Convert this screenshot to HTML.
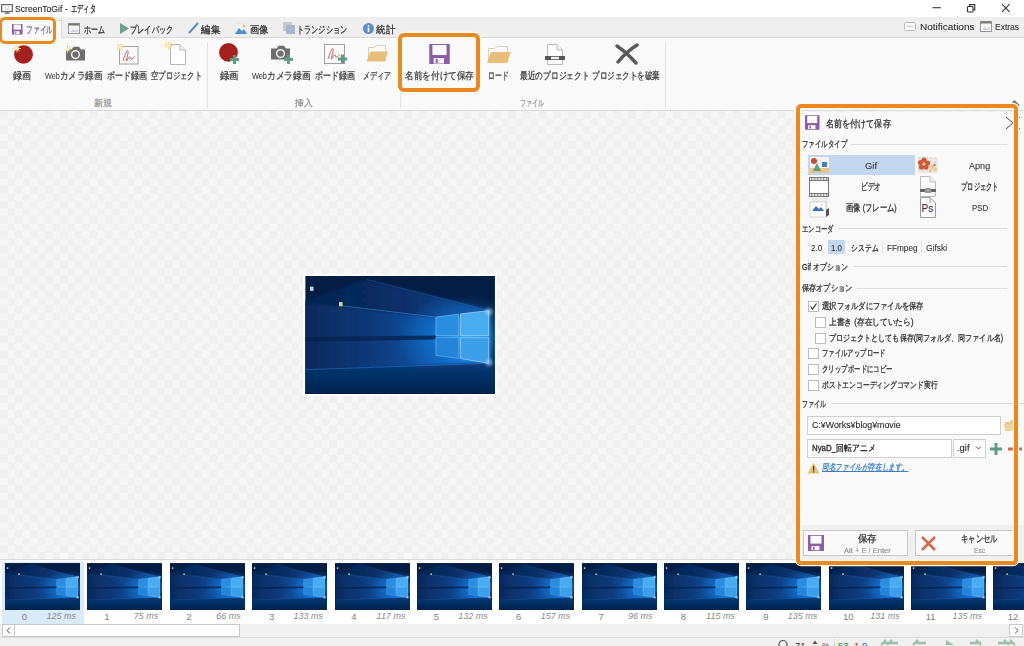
<!DOCTYPE html><html><head><meta charset="utf-8"><style>
html,body{margin:0;padding:0;width:1024px;height:646px;overflow:hidden;background:#fff;font-family:"Liberation Sans", sans-serif;}
.t{position:absolute;white-space:nowrap;line-height:1.2;-webkit-text-stroke:0.3px currentColor;}
.ns{-webkit-text-stroke:0;}
.b{position:absolute;box-sizing:border-box;}
</style></head><body>
<svg width="0" height="0" style="position:absolute">
<defs>
<linearGradient id="wbg" x1="0" y1="0" x2="1" y2="0"><stop offset="0" stop-color="#03224f"/><stop offset="0.6" stop-color="#0a4a92"/><stop offset="1" stop-color="#03295c"/></linearGradient>
<linearGradient id="beam" x1="0" y1="0" x2="1" y2="0"><stop offset="0" stop-color="#062656"/><stop offset="0.45" stop-color="#083c7e"/><stop offset="0.78" stop-color="#1062ba"/><stop offset="1" stop-color="#2a96ee"/></linearGradient><linearGradient id="ceil" x1="0" y1="0" x2="1" y2="0"><stop offset="0" stop-color="#05224c"/><stop offset="0.6" stop-color="#07306a"/><stop offset="1" stop-color="#0d55a8"/></linearGradient><linearGradient id="floor" x1="0" y1="0" x2="0" y2="1"><stop offset="0" stop-color="#073a78"/><stop offset="1" stop-color="#021a3c"/></linearGradient>
<radialGradient id="glow" cx="0.84" cy="0.52" r="0.36"><stop offset="0" stop-color="#35aeff" stop-opacity="0.8"/><stop offset="0.55" stop-color="#1a8af0" stop-opacity="0.3"/><stop offset="1" stop-color="#1a8af0" stop-opacity="0"/></radialGradient>
<filter id="bl" x="-20%" y="-20%" width="140%" height="140%"><feGaussianBlur stdDeviation="1.5"/></filter>
<symbol id="wall" viewBox="0 0 160 100" preserveAspectRatio="none">
<rect width="160" height="100" fill="#041d45"/>
<polygon points="-12,20.5 30,25 110,34.6 156,29 156,74 -12,82.5" fill="url(#beam)" filter="url(#bl)"/>
<polygon points="-12,25 52,3 156,29 110,34.6 30,25 -12,20.5" fill="url(#ceil)" filter="url(#bl)"/>
<rect width="160" height="100" fill="url(#glow)"/>
<polygon points="-12,80.5 156,73 170,110 -12,110" fill="url(#floor)" filter="url(#bl)"/>
<polygon points="0,51.5 110,50.2 110,53.5 0,55.5" fill="#05234f" opacity="0.8"/>
<line x1="30" y1="25" x2="110" y2="34.6" stroke="#4aa8f0" stroke-width="0.7" opacity="0.55"/>
<line x1="52" y1="3" x2="155" y2="29" stroke="#3a90e0" stroke-width="0.7" opacity="0.35"/>
<line x1="0" y1="79" x2="155" y2="73.6" stroke="#2f8ae0" stroke-width="0.8" opacity="0.45"/>
<polygon points="110.2,34.6 129.5,32.2 129.5,50.3 110.2,50.3" fill="#2a8ee0" stroke="#7cc8fb" stroke-width="0.5"/>
<polygon points="131,32 154.6,29.2 154.6,50.3 131,50.3" fill="#48acf0" stroke="#a8dcff" stroke-width="0.6"/>
<polygon points="110.2,52 129.5,52 129.5,69.4 110.2,67" fill="#2384d8" stroke="#6cbef8" stroke-width="0.5"/>
<polygon points="131,52 154.6,52 154.6,73.6 131,69.6" fill="#3c9fea" stroke="#98d4ff" stroke-width="0.6"/>
<circle cx="155" cy="30" r="3" fill="#bfe8ff" opacity="0.5" filter="url(#bl)"/>
<circle cx="155" cy="73" r="3" fill="#bfe8ff" opacity="0.5" filter="url(#bl)"/>
<rect x="4" y="9" width="3" height="3.5" fill="#c9d3de"/>
<rect x="28.5" y="22" width="3" height="3.5" fill="#e8d48a"/>
</symbol>
</defs></svg>
<div class="b" style="left:0px;top:0px;width:1024px;height:16.5px;background:#ffffff"></div>
<svg class="b" style="left:1px;top:3.5px" width="12" height="10" viewBox="0 0 12 10"><rect x="0.6" y="0.6" width="10.8" height="7" fill="#fafafa" stroke="#666" stroke-width="1.2"/><rect x="3.5" y="8.6" width="5" height="1.2" fill="#666"/><rect x="5.4" y="7.6" width="1.2" height="1.2" fill="#666"/><circle cx="4.5" cy="3" r="0.5" fill="#aaa"/><circle cx="7.5" cy="3" r="0.5" fill="#aaa"/><path d="M4.3 5H7.7" stroke="#aaa" stroke-width="0.6"/></svg>
<div class="t" id="t1" style="left:15.00px;top:2.80px;font-size:9.5px;color:#222;transform:scaleX(0.9047);transform-origin:0 50%;--w:47.30;-webkit-text-stroke:0.1px currentColor;"><span>ScreenToGif</span></div>
<div class="t" id="t2" style="left:65.00px;top:2.80px;font-size:9.5px;color:#222;transform:scaleX(0.8512);transform-origin:0 50%;--w:2.70;-webkit-text-stroke:0.1px currentColor;"><span>-</span></div>
<div class="t" id="t3" style="left:70.90px;top:2.80px;font-size:9.5px;color:#222;transform:scaleX(0.6175);transform-origin:0 50%;--w:24.70;"><span>エディタ</span></div>
<svg class="b" style="left:932px;top:3px" width="10" height="10" viewBox="0 0 10 10"><line x1="0.5" y1="4.7" x2="8.8" y2="4.7" stroke="#333" stroke-width="1.1"/></svg>
<svg class="b" style="left:966px;top:3px" width="11" height="10" viewBox="0 0 11 10"><rect x="1.5" y="3.5" width="5.5" height="5.5" rx="0.8" fill="none" stroke="#333" stroke-width="1.1"/><path d="M3.5 3.3V1.6H8.8V6.9H7.2" fill="none" stroke="#333" stroke-width="1.1"/></svg>
<svg class="b" style="left:1001px;top:3px" width="10" height="10" viewBox="0 0 10 10"><path d="M1 1.2L8.6 8.8M8.6 1.2L1 8.8" stroke="#333" stroke-width="1.1"/></svg>
<div class="b" style="left:0px;top:16.5px;width:1024px;height:21px;background:#efefef;border-bottom:1px solid #d9d9d9"></div>
<div class="b" style="left:1px;top:19.5px;width:60.5px;height:18.5px;background:#fafafa;border:1px solid #d6d6d6;border-bottom:none"></div>
<svg class="b" style="left:12px;top:24.2px" width="10.5" height="10.5" viewBox="0 0 16 16"><rect x="0" y="0" width="16" height="16" fill="#8d5ea7"/><rect x="2.5" y="0.8" width="11" height="7.8" fill="#fff"/><rect x="3.5" y="11" width="8" height="4.2" fill="#fff"/><rect x="5" y="11.6" width="1.6" height="3.2" fill="#8d5ea7"/></svg>
<div class="t" id="t4" style="left:26.00px;top:23.80px;font-size:9.5px;color:#6f6f8f;transform:scaleX(0.6750);transform-origin:0 50%;--w:27.00;"><span>ファイル</span></div>
<svg class="b" style="left:68px;top:23px" width="12" height="11" viewBox="0 0 12 11"><rect x="0.5" y="0.5" width="11" height="10" fill="#f4f4f4" stroke="#9a9a9a"/><rect x="0.5" y="0.5" width="11" height="2" fill="#777"/><path d="M2 9L5 6L7 8L9 6L10 9Z" fill="#c6d4ea"/></svg>
<div class="t" id="t5" style="left:84.00px;top:23.80px;font-size:9.5px;color:#333;transform:scaleX(0.7000);transform-origin:0 50%;--w:21.00;"><span>ホーム</span></div>
<svg class="b" style="left:120px;top:23px" width="9" height="11" viewBox="0 0 9 11"><path d="M0 0L9 5.5L0 11Z" fill="#6fa08a"/></svg>
<div class="t" id="t6" style="left:130.00px;top:23.80px;font-size:9.5px;color:#333;transform:scaleX(0.7167);transform-origin:0 50%;--w:43.00;"><span>プレイバック</span></div>
<svg class="b" style="left:188px;top:22px" width="11" height="12" viewBox="0 0 11 12"><path d="M1 11L10 1" stroke="#5b8cc8" stroke-width="2"/></svg>
<div class="t" id="t7" style="left:201.00px;top:23.80px;font-size:9.5px;color:#333;transform:scaleX(0.9500);transform-origin:0 50%;--w:19.00;"><span>編集</span></div>
<svg class="b" style="left:235px;top:23px" width="12" height="11" viewBox="0 0 12 11"><rect x="0" y="0" width="12" height="11" fill="#f2f2f2" stroke="#ccc" stroke-width="0.5"/><path d="M0 11L4 5L7 8L9 6L12 11Z" fill="#4b8fcf"/><circle cx="9" cy="3" r="1.2" fill="#e9b74a"/></svg>
<div class="t" id="t8" style="left:249.50px;top:23.80px;font-size:9.5px;color:#333;transform:scaleX(0.9250);transform-origin:0 50%;--w:18.50;"><span>画像</span></div>
<svg class="b" style="left:283px;top:22px" width="12" height="13" viewBox="0 0 12 13"><rect x="0" y="0" width="9" height="9" fill="#c7c9d1"/><rect x="3" y="3" width="9" height="9" fill="#a9b6cc"/></svg>
<div class="t" id="t9" style="left:297.00px;top:23.80px;font-size:9.5px;color:#333;transform:scaleX(0.7143);transform-origin:0 50%;--w:50.00;"><span>トランジション</span></div>
<svg class="b" style="left:363px;top:23px" width="11" height="11" viewBox="0 0 11 11"><circle cx="5.5" cy="5.5" r="5.5" fill="#5c8fc4"/><rect x="4.7" y="4.5" width="1.6" height="4.5" fill="#fff"/><circle cx="5.5" cy="2.8" r="0.9" fill="#fff"/></svg>
<div class="t" id="t10" style="left:376.00px;top:23.80px;font-size:9.5px;color:#333;transform:scaleX(0.9500);transform-origin:0 50%;--w:19.00;"><span>統計</span></div>
<svg class="b" style="left:904px;top:22px" width="12" height="9" viewBox="0 0 12 9"><rect x="0.5" y="0.5" width="11" height="8" rx="1" fill="#fafafa" stroke="#bbb"/><line x1="3" y1="4.5" x2="9" y2="4.5" stroke="#ccc"/></svg>
<div class="t" id="t11" style="left:919.50px;top:21.30px;font-size:9.5px;color:#333;transform:scaleX(1.0531);transform-origin:0 50%;--w:54.50;-webkit-text-stroke:0.1px currentColor;"><span>Notifications</span></div>
<svg class="b" style="left:980px;top:21px" width="12" height="11" viewBox="0 0 12 11"><rect x="0.5" y="0.5" width="11" height="10" fill="#f4f4f4" stroke="#9a9a9a"/><rect x="0.5" y="0.5" width="11" height="2" fill="#777"/><path d="M2 9L5 6L7 8L9 6L10 9Z" fill="#c6d4ea"/></svg>
<div class="t" id="t12" style="left:995.00px;top:21.30px;font-size:9.5px;color:#333;transform:scaleX(0.8910);transform-origin:0 50%;--w:24.00;-webkit-text-stroke:0.1px currentColor;"><span>Extras</span></div>
<div class="b" style="left:0px;top:37.5px;width:1024px;height:72.5px;background:#fafafa"></div>
<div class="b" style="left:0px;top:110px;width:1024px;height:2px;background:#dcdcdc"></div>
<div class="b" style="left:207px;top:42px;width:1px;height:66px;background:#e2e2e2"></div>
<div class="b" style="left:400px;top:42px;width:1px;height:66px;background:#e2e2e2"></div>
<div class="b" style="left:665px;top:42px;width:1px;height:66px;background:#e2e2e2"></div>
<svg class="b" style="left:13.5px;top:45px" width="26" height="24" viewBox="0 0 26 24"><circle cx="9.5" cy="9.4" r="9.4" fill="#a61f1f"/><g transform="translate(3,3.5)" stroke="#eccb6a" stroke-width="1"><path d="M-4 0H4M0 -4V4M-2.8 -2.8L2.8 2.8M2.8 -2.8L-2.8 2.8"/></g><circle cx="3" cy="3.5" r="1.9" fill="#fbeec0"/></svg>
<div class="t" id="t13" style="left:13.00px;top:69.80px;font-size:9.5px;color:#444;transform:scaleX(0.9000);transform-origin:0 50%;--w:18.00;"><span>録画</span></div>
<svg class="b" style="left:66px;top:45px" width="26" height="22" viewBox="0 0 26 22"><path d="M0 4.5H5.5L7.5 1.8H13L15 4.5H19V15.4H0Z" fill="#6e6e6e"/><circle cx="9.5" cy="9.6" r="3.9" fill="#6e6e6e" stroke="#f2f2f2" stroke-width="1.4"/><g transform="translate(1.5,4)" stroke="#eccb6a" stroke-width="1"><path d="M-4 0H4M0 -4V4M-2.8 -2.8L2.8 2.8M2.8 -2.8L-2.8 2.8"/></g><circle cx="1.5" cy="4" r="1.9" fill="#fbeec0"/></svg>
<div class="t" id="t14" style="left:44.70px;top:69.80px;font-size:9.5px;color:#444;transform:scaleX(0.7690);transform-origin:0 50%;--w:14.90;-webkit-text-stroke:0.1px currentColor;"><span>Web</span></div>
<div class="t" id="t15" style="left:60.10px;top:69.80px;font-size:9.5px;color:#444;transform:scaleX(0.8480);transform-origin:0 50%;--w:42.40;"><span>カメラ録画</span></div>
<svg class="b" style="left:116.5px;top:44px" width="26" height="24" viewBox="0 0 26 24"><rect x="2.5" y="2.5" width="18.5" height="17.5" fill="#fbfbfb" stroke="#a0a0a0"/><path d="M6 17C8 11 10 5 11 7C12 9 8 18 9.5 17C11 15 12 12 13 13C14 14 13 16 15 15C16 14.5 17 13 18 12.5" fill="none" stroke="#b8584e" stroke-width="0.9"/><g transform="translate(3,3)" stroke="#eccb6a" stroke-width="1"><path d="M-4 0H4M0 -4V4M-2.8 -2.8L2.8 2.8M2.8 -2.8L-2.8 2.8"/></g><circle cx="3" cy="3" r="1.9" fill="#fbeec0"/></svg>
<div class="t" id="t16" style="left:107.00px;top:69.80px;font-size:9.5px;color:#444;transform:scaleX(0.8000);transform-origin:0 50%;--w:40.00;"><span>ボード録画</span></div>
<svg class="b" style="left:165px;top:42px" width="24" height="24" viewBox="0 0 24 24"><path d="M5.5 2.5H15L20.5 8V22.5H5.5Z" fill="#fff" stroke="#b8b8b8"/><path d="M15 2.5V8H20.5" fill="#f2f2f2" stroke="#b8b8b8"/><g transform="translate(3.5,3.5)" stroke="#eccb6a" stroke-width="1"><path d="M-4 0H4M0 -4V4M-2.8 -2.8L2.8 2.8M2.8 -2.8L-2.8 2.8"/></g><circle cx="3.5" cy="3.5" r="1.9" fill="#fbeec0"/></svg>
<div class="t" id="t17" style="left:151.00px;top:69.80px;font-size:9.5px;color:#444;transform:scaleX(0.7286);transform-origin:0 50%;--w:51.00;"><span>空プロジェクト</span></div>
<div class="t" id="t18" style="left:94.00px;top:98.10px;font-size:9px;color:#999;transform:scaleX(1.0000);transform-origin:0 50%;--w:18.00;"><span>新規</span></div>
<svg class="b" style="left:219px;top:43px" width="26" height="24" viewBox="0 0 26 24"><circle cx="9.5" cy="9.4" r="9.4" fill="#a61f1f"/><g fill="#5f9c84"><rect x="11.0" y="15.0" width="9" height="3"/><rect x="14.0" y="12.0" width="3" height="9"/></g></svg>
<div class="t" id="t19" style="left:220.00px;top:69.80px;font-size:9.5px;color:#444;transform:scaleX(0.9375);transform-origin:0 50%;--w:18.75;"><span>録画</span></div>
<svg class="b" style="left:271px;top:44px" width="26" height="22" viewBox="0 0 26 22"><path d="M0 4.5H5.5L7.5 1.8H13L15 4.5H19V15.4H0Z" fill="#6e6e6e"/><circle cx="9.5" cy="9.6" r="3.9" fill="#6e6e6e" stroke="#f2f2f2" stroke-width="1.4"/><g fill="#5f9c84"><rect x="13.0" y="13.9" width="9" height="3"/><rect x="16.0" y="10.9" width="3" height="9"/></g></svg>
<div class="t" id="t20" style="left:252.00px;top:69.80px;font-size:9.5px;color:#444;transform:scaleX(0.7690);transform-origin:0 50%;--w:14.90;-webkit-text-stroke:0.1px currentColor;"><span>Web</span></div>
<div class="t" id="t21" style="left:267.40px;top:69.80px;font-size:9.5px;color:#444;transform:scaleX(0.8670);transform-origin:0 50%;--w:43.35;"><span>カメラ録画</span></div>
<svg class="b" style="left:322px;top:42px" width="26" height="24" viewBox="0 0 26 24"><rect x="2.5" y="2.5" width="20" height="19" fill="#fbfbfb" stroke="#a0a0a0"/><path d="M6 17C8 11 10 5 11 7C12 9 8 18 9.5 17C11 15 12 12 13 13C14 14 13 16 15 15C16 14.5 17 13 18 12.5" fill="none" stroke="#b8584e" stroke-width="0.9"/><g fill="#5f9c84"><rect x="16.0" y="15.5" width="9" height="3"/><rect x="19.0" y="12.5" width="3" height="9"/></g></svg>
<div class="t" id="t22" style="left:314.50px;top:69.80px;font-size:9.5px;color:#444;transform:scaleX(0.8000);transform-origin:0 50%;--w:40.00;"><span>ボード録画</span></div>
<svg class="b" style="left:365px;top:43px" width="24" height="20" viewBox="0 0 24 20"><path d="M3.5 18V4.5H9.5L11.5 2.5H20.5V18" fill="#fbfbfb" stroke="#d9d0bf" stroke-width="1"/><path d="M5.5 8.5H23L20 18.5H1.5Z" fill="#e8bf78"/></svg>
<div class="t" id="t23" style="left:363.00px;top:69.80px;font-size:9.5px;color:#444;transform:scaleX(0.7000);transform-origin:0 50%;--w:28.00;"><span>メディア</span></div>
<div class="t" id="t24" style="left:295.00px;top:98.10px;font-size:9px;color:#999;transform:scaleX(0.9722);transform-origin:0 50%;--w:17.50;"><span>挿入</span></div>
<svg class="b" style="left:429px;top:43.5px" width="21" height="20.5" viewBox="0 0 16 16"><rect x="0" y="0" width="16" height="16" fill="#8d5ea7"/><rect x="2.5" y="0.8" width="11" height="7.8" fill="#fff"/><rect x="3.5" y="11" width="8" height="4.2" fill="#fff"/><rect x="5" y="11.6" width="1.6" height="3.2" fill="#8d5ea7"/></svg>
<div class="t" id="t25" style="left:405.00px;top:69.80px;font-size:9.5px;color:#444;transform:scaleX(0.8625);transform-origin:0 50%;--w:69.00;"><span>名前を付けて保存</span></div>
<svg class="b" style="left:485px;top:43px" width="26" height="22" viewBox="0 0 26 22"><path d="M3.5 19V5.5H10L12 3.5H22.5V19" fill="#fbfbfb" stroke="#d9d0bf" stroke-width="1"/><path d="M6 9H26L22 20H2Z" fill="#e8bf78"/></svg>
<div class="t" id="t26" style="left:487.50px;top:69.80px;font-size:9.5px;color:#444;transform:scaleX(0.6833);transform-origin:0 50%;--w:20.50;"><span>ロード</span></div>
<svg class="b" style="left:542px;top:42px" width="24" height="24" viewBox="0 0 24 24"><path d="M5.5 2.5H15L20.5 8V22.5H5.5Z" fill="#fff" stroke="#b8b8b8"/><path d="M15 2.5V8H20.5" fill="#f2f2f2" stroke="#b8b8b8"/><rect x="3" y="14" width="20" height="4" fill="#555"/><rect x="9" y="14.8" width="8" height="2.4" fill="#eee"/></svg>
<div class="t" id="t27" style="left:519.60px;top:69.80px;font-size:9.5px;color:#444;transform:scaleX(0.7711);transform-origin:0 50%;--w:69.40;"><span>最近のプロジェクト</span></div>
<svg class="b" style="left:614px;top:43px" width="26" height="23" viewBox="0 0 26 23"><path d="M3 3Q12 9 22 20M23 2Q12 9 4 19" fill="none" stroke="#5a5a5a" stroke-width="3.4" stroke-linecap="round"/></svg>
<div class="t" id="t28" style="left:592.00px;top:69.80px;font-size:9.5px;color:#444;transform:scaleX(0.7556);transform-origin:0 50%;--w:68.00;"><span>プロジェクトを破棄</span></div>
<div class="t" id="t29" style="left:520.00px;top:98.10px;font-size:9px;color:#999;transform:scaleX(0.6667);transform-origin:0 50%;--w:24.00;"><span>ファイル</span></div>
<div class="b" style="left:0px;top:111.4px;width:1024px;height:447.6px;background:conic-gradient(#f6f6f6 25%,#f0f0f0 0 50%,#f6f6f6 0 75%,#f0f0f0 0);background-size:14.968px 14.968px"></div>
<div class="b" style="left:303px;top:274px;width:194px;height:122px;background:#fbfbfb"></div>
<svg class="b" style="left:304.6px;top:275.8px" width="190.2" height="118.6" viewBox="0 0 160 100"><use href="#wall"/></svg>
<div class="b" style="left:0px;top:559px;width:1024px;height:1px;background:#d9d9d9"></div>
<div class="b" style="left:0px;top:560px;width:1024px;height:64px;background:#ffffff"></div>
<div class="b" style="left:2px;top:562px;width:82px;height:62px;background:#d9ebf9"></div>
<svg class="b" style="left:5.0px;top:563px" width="75" height="47" viewBox="0 0 160 100"><use href="#wall"/></svg>
<div class="t" id="t30" style="left:-125.5px;width:300px;text-align:center;top:610.50px;font-size:9.5px;color:#808080;-webkit-text-stroke:0"><span>0</span></div>
<div class="t" id="t31" style="left:-224.0px;width:300px;text-align:right;top:610.80px;font-size:9px;color:#8a8a8a;font-style:italic;-webkit-text-stroke:0"><span>125 ms</span></div>
<svg class="b" style="left:87.4px;top:563px" width="75" height="47" viewBox="0 0 160 100"><use href="#wall"/></svg>
<div class="t" id="t32" style="left:-43.129999999999995px;width:300px;text-align:center;top:610.50px;font-size:9.5px;color:#808080;-webkit-text-stroke:0"><span>1</span></div>
<div class="t" id="t33" style="left:-141.63px;width:300px;text-align:right;top:610.80px;font-size:9px;color:#8a8a8a;font-style:italic;-webkit-text-stroke:0"><span>75 ms</span></div>
<svg class="b" style="left:169.7px;top:563px" width="75" height="47" viewBox="0 0 160 100"><use href="#wall"/></svg>
<div class="t" id="t34" style="left:39.24000000000001px;width:300px;text-align:center;top:610.50px;font-size:9.5px;color:#808080;-webkit-text-stroke:0"><span>2</span></div>
<div class="t" id="t35" style="left:-59.25999999999999px;width:300px;text-align:right;top:610.80px;font-size:9px;color:#8a8a8a;font-style:italic;-webkit-text-stroke:0"><span>66 ms</span></div>
<svg class="b" style="left:252.1px;top:563px" width="75" height="47" viewBox="0 0 160 100"><use href="#wall"/></svg>
<div class="t" id="t36" style="left:121.61000000000001px;width:300px;text-align:center;top:610.50px;font-size:9.5px;color:#808080;-webkit-text-stroke:0"><span>3</span></div>
<div class="t" id="t37" style="left:23.110000000000014px;width:300px;text-align:right;top:610.80px;font-size:9px;color:#8a8a8a;font-style:italic;-webkit-text-stroke:0"><span>133 ms</span></div>
<svg class="b" style="left:334.5px;top:563px" width="75" height="47" viewBox="0 0 160 100"><use href="#wall"/></svg>
<div class="t" id="t38" style="left:203.98000000000002px;width:300px;text-align:center;top:610.50px;font-size:9.5px;color:#808080;-webkit-text-stroke:0"><span>4</span></div>
<div class="t" id="t39" style="left:105.48000000000002px;width:300px;text-align:right;top:610.80px;font-size:9px;color:#8a8a8a;font-style:italic;-webkit-text-stroke:0"><span>117 ms</span></div>
<svg class="b" style="left:416.9px;top:563px" width="75" height="47" viewBox="0 0 160 100"><use href="#wall"/></svg>
<div class="t" id="t40" style="left:286.35px;width:300px;text-align:center;top:610.50px;font-size:9.5px;color:#808080;-webkit-text-stroke:0"><span>5</span></div>
<div class="t" id="t41" style="left:187.85000000000002px;width:300px;text-align:right;top:610.80px;font-size:9px;color:#8a8a8a;font-style:italic;-webkit-text-stroke:0"><span>132 ms</span></div>
<svg class="b" style="left:499.2px;top:563px" width="75" height="47" viewBox="0 0 160 100"><use href="#wall"/></svg>
<div class="t" id="t42" style="left:368.72px;width:300px;text-align:center;top:610.50px;font-size:9.5px;color:#808080;-webkit-text-stroke:0"><span>6</span></div>
<div class="t" id="t43" style="left:270.22px;width:300px;text-align:right;top:610.80px;font-size:9px;color:#8a8a8a;font-style:italic;-webkit-text-stroke:0"><span>157 ms</span></div>
<svg class="b" style="left:581.6px;top:563px" width="75" height="47" viewBox="0 0 160 100"><use href="#wall"/></svg>
<div class="t" id="t44" style="left:451.09000000000003px;width:300px;text-align:center;top:610.50px;font-size:9.5px;color:#808080;-webkit-text-stroke:0"><span>7</span></div>
<div class="t" id="t45" style="left:352.59000000000003px;width:300px;text-align:right;top:610.80px;font-size:9px;color:#8a8a8a;font-style:italic;-webkit-text-stroke:0"><span>96 ms</span></div>
<svg class="b" style="left:664.0px;top:563px" width="75" height="47" viewBox="0 0 160 100"><use href="#wall"/></svg>
<div class="t" id="t46" style="left:533.46px;width:300px;text-align:center;top:610.50px;font-size:9.5px;color:#808080;-webkit-text-stroke:0"><span>8</span></div>
<div class="t" id="t47" style="left:434.96000000000004px;width:300px;text-align:right;top:610.80px;font-size:9px;color:#8a8a8a;font-style:italic;-webkit-text-stroke:0"><span>115 ms</span></div>
<svg class="b" style="left:746.3px;top:563px" width="75" height="47" viewBox="0 0 160 100"><use href="#wall"/></svg>
<div class="t" id="t48" style="left:615.83px;width:300px;text-align:center;top:610.50px;font-size:9.5px;color:#808080;-webkit-text-stroke:0"><span>9</span></div>
<div class="t" id="t49" style="left:517.33px;width:300px;text-align:right;top:610.80px;font-size:9px;color:#8a8a8a;font-style:italic;-webkit-text-stroke:0"><span>135 ms</span></div>
<svg class="b" style="left:828.7px;top:563px" width="75" height="47" viewBox="0 0 160 100"><use href="#wall"/></svg>
<div class="t" id="t50" style="left:698.2px;width:300px;text-align:center;top:610.50px;font-size:9.5px;color:#808080;-webkit-text-stroke:0"><span>10</span></div>
<div class="t" id="t51" style="left:599.7px;width:300px;text-align:right;top:610.80px;font-size:9px;color:#8a8a8a;font-style:italic;-webkit-text-stroke:0"><span>131 ms</span></div>
<svg class="b" style="left:911.1px;top:563px" width="75" height="47" viewBox="0 0 160 100"><use href="#wall"/></svg>
<div class="t" id="t52" style="left:780.57px;width:300px;text-align:center;top:610.50px;font-size:9.5px;color:#808080;-webkit-text-stroke:0"><span>11</span></div>
<div class="t" id="t53" style="left:682.07px;width:300px;text-align:right;top:610.80px;font-size:9px;color:#8a8a8a;font-style:italic;-webkit-text-stroke:0"><span>135 ms</span></div>
<svg class="b" style="left:993.4px;top:563px" width="75" height="47" viewBox="0 0 160 100"><use href="#wall"/></svg>
<div class="t" id="t54" style="left:862.94px;width:300px;text-align:center;top:610.50px;font-size:9.5px;color:#808080;-webkit-text-stroke:0"><span>12</span></div>
<div class="b" style="left:0px;top:624px;width:1024px;height:13px;background:#f0f0f0"></div>
<div class="b" style="left:2px;top:624px;width:238px;height:13px;background:#fff;border:1px solid #c8c8c8"></div>
<div class="b" style="left:2px;top:624px;width:13px;height:13px;background:#fff;border:1px solid #c8c8c8"></div>
<svg class="b" style="left:5px;top:626px" width="8" height="9" viewBox="0 0 8 9"><path d="M5 1.5L2 4.5L5 7.5" fill="none" stroke="#444"/></svg>
<div class="b" style="left:1009px;top:624px;width:14px;height:13px;background:#fff;border:1px solid #c8c8c8"></div>
<svg class="b" style="left:1012px;top:626px" width="8" height="9" viewBox="0 0 8 9"><path d="M3 1.5L6 4.5L3 7.5" fill="none" stroke="#444"/></svg>
<div class="b" style="left:0px;top:637px;width:1024px;height:9px;background:#f0f0f0;border-top:1px solid #dcdcdc"></div>
<svg class="b" style="left:778px;top:639px" width="10" height="7" viewBox="0 0 10 7"><circle cx="5" cy="5.5" r="4" fill="none" stroke="#555" stroke-width="1.2"/></svg>
<div class="t" id="t55" style="left:795px;top:640.30px;font-size:9.5px;color:#333;-webkit-text-stroke:0.1px currentColor;"><span>71</span></div>
<svg class="b" style="left:812px;top:640px" width="6" height="6" viewBox="0 0 6 6"><path d="M3 0.5L5.5 4H0.5Z" fill="#555"/></svg>
<div class="t" id="t56" style="left:822px;top:641.20px;font-size:8px;color:#777;-webkit-text-stroke:0.1px currentColor;"><span>%</span></div>
<div class="b" style="left:834px;top:639px;width:1px;height:7px;background:#ddd"></div>
<div class="t" id="t57" style="left:838px;top:640.30px;font-size:9.5px;color:#3c9a4a;-webkit-text-stroke:0.1px currentColor;"><span>53</span></div>
<div class="t" id="t58" style="left:854px;top:640.30px;font-size:9.5px;color:#c0392b;-webkit-text-stroke:0.1px currentColor;"><span>1</span></div>
<div class="t" id="t59" style="left:862px;top:640.30px;font-size:9.5px;color:#2f6fb5;-webkit-text-stroke:0.1px currentColor;"><span>0</span></div>
<svg class="b" style="left:878px;top:639px" width="145" height="7" viewBox="0 0 145 7"><g fill="none" stroke="#9cc0ae" stroke-width="2.4"><path d="M8 1L3 6M14 1L9 6M6 4H20"/><path d="M40 1L35 6M38 4H48"/><path d="M68 1L76 6L68 6Z" fill="#9cc0ae" stroke="none"/><path d="M98 1L103 6M92 4H103"/><path d="M126 1L131 6M132 1L137 6M120 4H134"/></g></svg>
<div class="b" style="left:797px;top:111.8px;width:227px;height:451px;background:#f9f9f9"></div>
<div class="b" style="left:797px;top:525px;width:227px;height:38px;background:#f0f0f0"></div>
<svg class="b" style="left:805.3px;top:115.2px" width="14.5" height="15" viewBox="0 0 16 16"><rect x="0" y="0" width="16" height="16" fill="#8d5ea7"/><rect x="2.5" y="0.8" width="11" height="7.8" fill="#fff"/><rect x="3.5" y="11" width="8" height="4.2" fill="#fff"/><rect x="5" y="11.6" width="1.6" height="3.2" fill="#8d5ea7"/></svg>
<div class="t" id="t60" style="left:825.70px;top:117.80px;font-size:9.5px;color:#333;transform:scaleX(0.8075);transform-origin:0 50%;--w:64.60;"><span>名前を付けて保存</span></div>
<svg class="b" style="left:1005px;top:116px" width="16" height="14" viewBox="0 0 16 14"><path d="M1 1L15 13M15 1L1 13" fill="none" stroke="#444" stroke-width="1"/></svg>
<div class="t" id="t61" style="left:802.00px;top:139.10px;font-size:9px;color:#333;transform:scaleX(0.7143);transform-origin:0 50%;--w:45.00;"><span>ファイルタイプ</span></div>
<div class="b" style="left:851px;top:143.6px;width:156px;height:1px;background:#dedede"></div>
<div class="b" style="left:808px;top:155px;width:107px;height:20px;background:#c4d7f0"></div>
<svg class="b" style="left:810px;top:157px" width="19" height="16" viewBox="0 0 19 16"><rect x="0" y="0" width="19" height="16" fill="#f3f3f3"/><rect x="0" y="11" width="19" height="5" fill="#e6c48a"/><circle cx="4" cy="4" r="3" fill="#c74b3c"/><path d="M3 14L7 6L11 14Z" fill="#5f9c84"/><rect x="12" y="5" width="5" height="5" fill="#4a7fb5"/></svg>
<div class="t" id="t62" style="left:865.00px;top:159.80px;font-size:9.5px;color:#333;transform:scaleX(0.9884);transform-origin:0 50%;--w:12.00;-webkit-text-stroke:0.1px currentColor;"><span>Gif</span></div>
<svg class="b" style="left:809px;top:177px" width="20" height="20" viewBox="0 0 20 20"><rect x="0.5" y="0.5" width="19" height="19" fill="#fff" stroke="#777"/><line x1="0.5" y1="3.5" x2="19.5" y2="3.5" stroke="#777"/><line x1="0.5" y1="16.5" x2="19.5" y2="16.5" stroke="#777"/><rect x="1.8" y="1.3" width="1.6" height="1.4" fill="#666"/><rect x="1.8" y="17.3" width="1.6" height="1.4" fill="#666"/><rect x="4.8" y="1.3" width="1.6" height="1.4" fill="#666"/><rect x="4.8" y="17.3" width="1.6" height="1.4" fill="#666"/><rect x="7.8" y="1.3" width="1.6" height="1.4" fill="#666"/><rect x="7.8" y="17.3" width="1.6" height="1.4" fill="#666"/><rect x="10.8" y="1.3" width="1.6" height="1.4" fill="#666"/><rect x="10.8" y="17.3" width="1.6" height="1.4" fill="#666"/><rect x="13.8" y="1.3" width="1.6" height="1.4" fill="#666"/><rect x="13.8" y="17.3" width="1.6" height="1.4" fill="#666"/><rect x="16.8" y="1.3" width="1.6" height="1.4" fill="#666"/><rect x="16.8" y="17.3" width="1.6" height="1.4" fill="#666"/></svg>
<div class="t" id="t63" style="left:861.00px;top:180.80px;font-size:9.5px;color:#333;transform:scaleX(0.6667);transform-origin:0 50%;--w:20.00;"><span>ビデオ</span></div>
<svg class="b" style="left:809px;top:198px" width="21" height="20" viewBox="0 0 21 20"><path d="M4 0H18V14H4Z" fill="#eee" stroke="#ccc" stroke-width="0.5"/><rect x="1" y="4" width="16" height="15" fill="#fff" stroke="#bbb" stroke-width="0.6"/><path d="M17 12L20 10V17L17 19Z" fill="#555"/><path d="M3 13L7 8L10 11L12 9L15 13Z" fill="#3b73b5"/><circle cx="13" cy="7" r="0.8" fill="#e8a94a"/></svg>
<div class="t" id="t64" style="left:845.70px;top:201.80px;font-size:9.5px;color:#333;transform:scaleX(0.7351);transform-origin:0 50%;--w:50.70;"><span>画像 (フレーム)</span></div>
<svg class="b" style="left:918px;top:157px" width="20" height="16" viewBox="0 0 20 16"><rect x="0" y="0" width="20" height="16" fill="#efe9e6"/><rect x="0" y="0" width="2" height="2" fill="#e2dcda"/><rect x="0" y="4" width="2" height="2" fill="#e2dcda"/><rect x="0" y="8" width="2" height="2" fill="#e2dcda"/><rect x="0" y="12" width="2" height="2" fill="#e2dcda"/><rect x="4" y="0" width="2" height="2" fill="#e2dcda"/><rect x="4" y="4" width="2" height="2" fill="#e2dcda"/><rect x="4" y="8" width="2" height="2" fill="#e2dcda"/><rect x="4" y="12" width="2" height="2" fill="#e2dcda"/><rect x="8" y="0" width="2" height="2" fill="#e2dcda"/><rect x="8" y="4" width="2" height="2" fill="#e2dcda"/><rect x="8" y="8" width="2" height="2" fill="#e2dcda"/><rect x="8" y="12" width="2" height="2" fill="#e2dcda"/><rect x="12" y="0" width="2" height="2" fill="#e2dcda"/><rect x="12" y="4" width="2" height="2" fill="#e2dcda"/><rect x="12" y="8" width="2" height="2" fill="#e2dcda"/><rect x="12" y="12" width="2" height="2" fill="#e2dcda"/><rect x="16" y="0" width="2" height="2" fill="#e2dcda"/><rect x="16" y="4" width="2" height="2" fill="#e2dcda"/><rect x="16" y="8" width="2" height="2" fill="#e2dcda"/><rect x="16" y="12" width="2" height="2" fill="#e2dcda"/><g fill="#cc5a3a"><circle cx="6" cy="3" r="2.6"/><circle cx="9.5" cy="6" r="2.6"/><circle cx="8" cy="10" r="2.6"/><circle cx="3.5" cy="10" r="2.6"/><circle cx="2.5" cy="5.5" r="2.6"/></g><circle cx="6" cy="7" r="1.6" fill="#f2c27a"/><g fill="#e9c79a"><circle cx="14" cy="10" r="2"/><circle cx="17" cy="12.5" r="2"/><circle cx="12.5" cy="13.5" r="1.8"/></g><circle cx="16.5" cy="8" r="1.3" fill="#d77a50"/></svg>
<div class="t" id="t65" style="left:968.80px;top:159.80px;font-size:9.5px;color:#333;transform:scaleX(0.9555);transform-origin:0 50%;--w:21.20;-webkit-text-stroke:0.1px currentColor;"><span>Apng</span></div>
<svg class="b" style="left:920px;top:176px" width="16" height="21" viewBox="0 0 16 21"><path d="M0.5 0.5H10L15.5 6V20.5H0.5Z" fill="#fff" stroke="#bbb"/><path d="M10 0.5V6H15.5" fill="#f0f0f0" stroke="#bbb"/><rect x="0" y="13" width="16" height="3" fill="#666"/><rect x="5" y="12" width="6" height="5" fill="#999"/></svg>
<div class="t" id="t66" style="left:960.50px;top:180.80px;font-size:9.5px;color:#333;transform:scaleX(0.6250);transform-origin:0 50%;--w:37.50;"><span>プロジェクト</span></div>
<svg class="b" style="left:920px;top:197px" width="16" height="21" viewBox="0 0 16 21"><path d="M0.5 0.5H10L15.5 6V20.5H0.5Z" fill="#fff" stroke="#999"/><path d="M10 0.5V6" fill="none" stroke="#999"/></svg>
<div class="t" id="t67" style="left:921.5px;top:203.00px;font-size:10px;color:#1e2a55;-webkit-text-stroke:0.1px currentColor;"><span>Ps</span></div>
<div class="t" id="t68" style="left:971.60px;top:201.80px;font-size:9.5px;color:#333;transform:scaleX(0.8288);transform-origin:0 50%;--w:16.20;-webkit-text-stroke:0.1px currentColor;"><span>PSD</span></div>
<div class="t" id="t69" style="left:802.00px;top:224.10px;font-size:9px;color:#333;transform:scaleX(0.7000);transform-origin:0 50%;--w:31.50;"><span>エンコーダ</span></div>
<div class="b" style="left:838px;top:228.2px;width:169px;height:1px;background:#dedede"></div>
<div class="b" style="left:828px;top:240px;width:17px;height:14px;background:#c4d7f0"></div>
<div class="t" id="t70" style="left:810.60px;top:242.60px;font-size:9px;color:#333;transform:scaleX(0.9109);transform-origin:0 50%;--w:11.40;-webkit-text-stroke:0.1px currentColor;"><span>2.0</span></div>
<div class="t" id="t71" style="left:831.00px;top:242.60px;font-size:9px;color:#333;transform:scaleX(0.8789);transform-origin:0 50%;--w:11.00;-webkit-text-stroke:0.1px currentColor;"><span>1.0</span></div>
<div class="t" id="t72" style="left:850.50px;top:242.60px;font-size:9px;color:#333;transform:scaleX(0.7639);transform-origin:0 50%;--w:27.50;"><span>システム</span></div>
<div class="b" style="left:882px;top:241px;width:1px;height:13px;background:#e2e2e2"></div>
<div class="t" id="t73" style="left:886.50px;top:242.60px;font-size:9px;color:#333;transform:scaleX(0.9100);transform-origin:0 50%;--w:30.50;-webkit-text-stroke:0.1px currentColor;"><span>FFmpeg</span></div>
<div class="b" style="left:921px;top:241px;width:1px;height:13px;background:#e2e2e2"></div>
<div class="t" id="t74" style="left:926.00px;top:242.60px;font-size:9px;color:#333;transform:scaleX(0.9333);transform-origin:0 50%;--w:21.00;-webkit-text-stroke:0.1px currentColor;"><span>Gifski</span></div>
<div class="t" id="t75" style="left:802.00px;top:261.60px;font-size:9px;color:#333;transform:scaleX(0.7795);transform-origin:0 50%;--w:46.00;"><span>Gif オプション</span></div>
<div class="b" style="left:853px;top:266.2px;width:154px;height:1px;background:#dedede"></div>
<div class="t" id="t76" style="left:802.00px;top:283.10px;font-size:9px;color:#333;transform:scaleX(0.7937);transform-origin:0 50%;--w:50.00;"><span>保存オプション</span></div>
<div class="b" style="left:857px;top:287.7px;width:150px;height:1px;background:#dedede"></div>
<div class="b" style="left:808px;top:301px;width:11px;height:11px;background:#fff;border:1px solid #bdbdbd"></div>
<svg class="b" style="left:808px;top:301px" width="11" height="11" viewBox="0 0 11 11"><path d="M2.5 5.5L4.5 8L8.5 2.5" fill="none" stroke="#222" stroke-width="1.1"/></svg>
<div class="t" id="t77" style="left:822.00px;top:301.10px;font-size:9px;color:#333;transform:scaleX(0.8056);transform-origin:0 50%;--w:101.50;"><span>選択フォルダにファイルを保存</span></div>
<div class="b" style="left:815px;top:317px;width:11px;height:11px;background:#fff;border:1px solid #bdbdbd"></div>
<div class="t" id="t78" style="left:829.00px;top:317.10px;font-size:9px;color:#333;transform:scaleX(0.8579);transform-origin:0 50%;--w:84.50;"><span>上書き (存在していたら)</span></div>
<div class="b" style="left:815px;top:333px;width:11px;height:11px;background:#fff;border:1px solid #bdbdbd"></div>
<div class="t" id="t79" style="left:829.00px;top:333.10px;font-size:9px;color:#333;transform:scaleX(0.7838);transform-origin:0 50%;--w:174.00;"><span>プロジェクトとしても保存(同フォルダ、同ファイル名)</span></div>
<div class="b" style="left:808px;top:348px;width:11px;height:11px;background:#fff;border:1px solid #bdbdbd"></div>
<div class="t" id="t80" style="left:822.00px;top:348.10px;font-size:9px;color:#333;transform:scaleX(0.7067);transform-origin:0 50%;--w:63.60;"><span>ファイルアップロード</span></div>
<div class="b" style="left:808px;top:364px;width:11px;height:11px;background:#fff;border:1px solid #bdbdbd"></div>
<div class="t" id="t81" style="left:822.00px;top:364.10px;font-size:9px;color:#333;transform:scaleX(0.7131);transform-origin:0 50%;--w:70.60;"><span>クリップボードにコピー</span></div>
<div class="b" style="left:808px;top:380px;width:11px;height:11px;background:#fff;border:1px solid #bdbdbd"></div>
<div class="t" id="t82" style="left:822.00px;top:380.10px;font-size:9px;color:#333;transform:scaleX(0.7542);transform-origin:0 50%;--w:115.40;"><span>ポストエンコーディングコマンド実行</span></div>
<div class="t" id="t83" style="left:802.00px;top:399.10px;font-size:9px;color:#333;transform:scaleX(0.6667);transform-origin:0 50%;--w:24.00;"><span>ファイル</span></div>
<div class="b" style="left:831px;top:403.2px;width:193px;height:1px;background:#dedede"></div>
<div class="b" style="left:807px;top:416px;width:194px;height:19px;background:#fff;border:1px solid #cfcfcf"></div>
<div class="t" id="t84" style="left:811.60px;top:420.10px;font-size:9px;color:#222;transform:scaleX(0.9804);transform-origin:0 50%;--w:88.60;-webkit-text-stroke:0.1px currentColor;"><span>C:¥Works¥blog¥movie</span></div>
<svg class="b" style="left:1004px;top:419px" width="16" height="13" viewBox="0 0 16 13"><path d="M1 3H6L7 1H14V12H1Z" fill="#e9c88f"/><path d="M0 5H16L14 12H1Z" fill="#f0d39c"/></svg>
<div class="b" style="left:807px;top:439px;width:145px;height:19px;background:#fff;border:1px solid #cfcfcf"></div>
<div class="t" id="t85" style="left:811.60px;top:443.10px;font-size:9px;color:#222;transform:scaleX(0.8743);transform-origin:0 50%;--w:63.40;"><span>NyaD_回転アニメ</span></div>
<div class="b" style="left:953px;top:439px;width:33px;height:19px;background:#fff;border:1px solid #cfcfcf"></div>
<div class="t" id="t86" style="left:956.80px;top:443.10px;font-size:9px;color:#222;transform:scaleX(1.0403);transform-origin:0 50%;--w:12.50;-webkit-text-stroke:0.1px currentColor;"><span>.gif</span></div>
<svg class="b" style="left:975px;top:445px" width="7" height="6" viewBox="0 0 7 6"><path d="M1 1.5L3.5 4L6 1.5" fill="none" stroke="#555"/></svg>
<svg class="b" style="left:990px;top:443px" width="12" height="12" viewBox="0 0 12 12"><rect x="0" y="4.5" width="12" height="3" fill="#5f9c84"/><rect x="4.5" y="0" width="3" height="12" fill="#5f9c84"/></svg>
<svg class="b" style="left:1008px;top:447px" width="14" height="4" viewBox="0 0 14 4"><rect x="0" y="0.5" width="14" height="3" fill="#cf6a4c"/></svg>
<svg class="b" style="left:807px;top:462px" width="13" height="12" viewBox="0 0 13 12"><path d="M6.5 0.5L12.5 11.5H0.5Z" fill="#e6c37a"/><rect x="6" y="4" width="1.2" height="4.5" fill="#333"/><rect x="6" y="9.3" width="1.2" height="1.2" fill="#333"/></svg>
<div class="t" id="t87" style="left:822.30px;top:462.10px;font-size:9px;color:#3b7fc4;transform:scaleX(0.7368);transform-origin:0 50%;--w:86.20;font-style:italic;text-decoration:underline"><span>同名ファイルが存在します。</span></div>
<div class="b" style="left:803px;top:530px;width:105px;height:26px;background:#fafafa;border:1px solid #c8c8c8"></div>
<svg class="b" style="left:808px;top:535px" width="16" height="16" viewBox="0 0 16 16"><rect x="0" y="0" width="16" height="16" fill="#8d5ea7"/><rect x="2.5" y="0.8" width="11" height="7.8" fill="#fff"/><rect x="3.5" y="11" width="8" height="4.2" fill="#fff"/><rect x="5" y="11.6" width="1.6" height="3.2" fill="#8d5ea7"/></svg>
<div class="t" id="t88" style="left:858.40px;top:532.50px;font-size:10px;color:#333;transform:scaleX(0.9450);transform-origin:0 50%;--w:18.90;"><span>保存</span></div>
<div class="t" id="t89" style="left:843.90px;top:546.80px;font-size:7px;color:#888;transform:scaleX(1.0763);transform-origin:0 50%;--w:46.70;-webkit-text-stroke:0.1px currentColor;"><span>Alt + E / Enter</span></div>
<div class="b" style="left:915px;top:530px;width:100px;height:26px;background:#fafafa;border:1px solid #c8c8c8"></div>
<svg class="b" style="left:920px;top:535px" width="17" height="17" viewBox="0 0 17 17"><path d="M2 2L15 15M15 2L2 15" stroke="#cf6a4c" stroke-width="2.6"/></svg>
<div class="t" id="t90" style="left:960.80px;top:532.50px;font-size:10px;color:#333;transform:scaleX(0.7360);transform-origin:0 50%;--w:36.80;"><span>キャンセル</span></div>
<div class="t" id="t91" style="left:974.00px;top:546.80px;font-size:7px;color:#888;transform:scaleX(0.9424);transform-origin:0 50%;--w:11.00;-webkit-text-stroke:0.1px currentColor;"><span>Esc</span></div>
<svg class="b" style="left:1009px;top:100px" width="11" height="8" viewBox="0 0 11 8"><path d="M1 6L5.5 1.5L10 6" fill="none" stroke="#777" stroke-width="2.2"/></svg>
<div class="b" style="left:796px;top:104px;width:222px;height:460.5px;border:4px solid #e88923;border-radius:5px;box-shadow:0 0 0 1.2px #fffbea,inset 0 0 0 1.2px #fffbea"></div>
<div class="b" style="left:-1.5px;top:16.5px;width:57.3px;height:27.5px;border:3.3px solid #e88923;border-radius:6px;box-shadow:0 0 0 1.2px #fffbea,inset 0 0 0 1.2px #fffbea"></div>
<div class="b" style="left:398px;top:32.5px;width:81.5px;height:59.5px;border:4px solid #e88923;border-radius:6px;box-shadow:0 0 0 1.2px #fffbea,inset 0 0 0 1.2px #fffbea"></div>
<script>
(function(){try{var ds=document.querySelectorAll('.t');for(var i=0;i<ds.length;i++){var d=ds[i];var w=parseFloat(getComputedStyle(d).getPropertyValue('--w'));if(!w)continue;var sp=d.firstChild;var prev=d.style.transform;d.style.transform='none';var nw=sp.getBoundingClientRect().width;if(nw>0){d.style.transform='scaleX('+(w/nw)+')';}else{d.style.transform=prev;}}}catch(e){}})();
</script>
</body></html>
